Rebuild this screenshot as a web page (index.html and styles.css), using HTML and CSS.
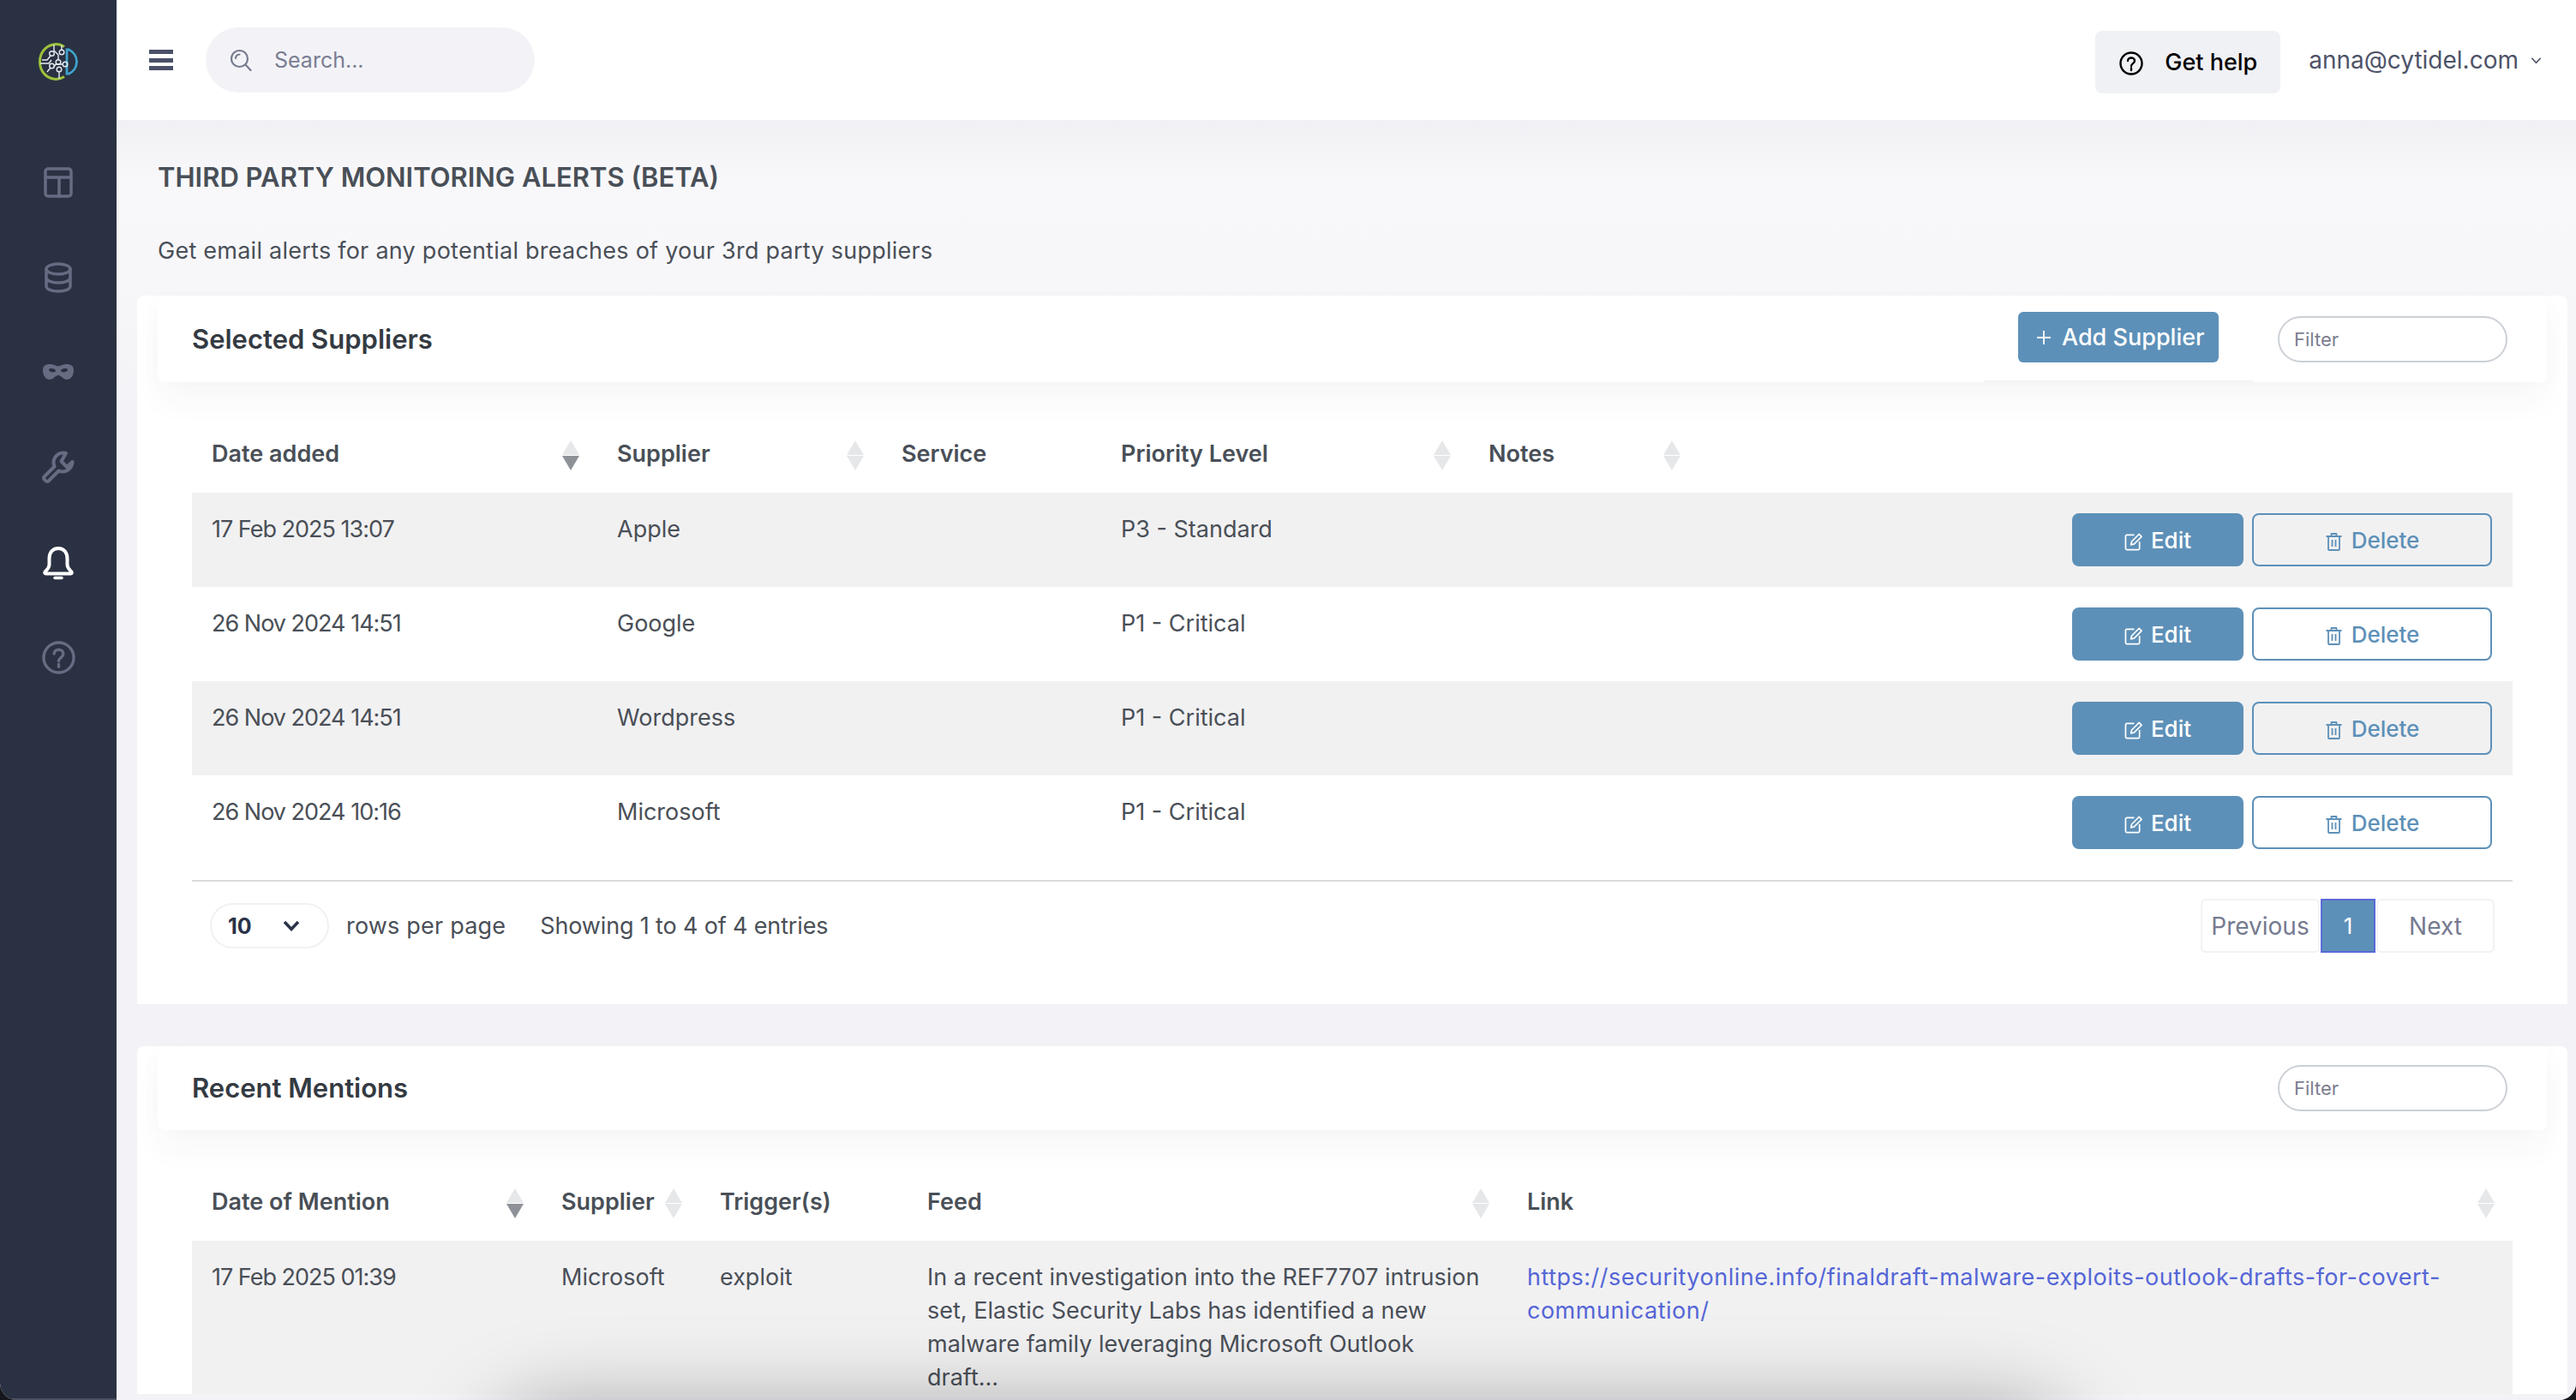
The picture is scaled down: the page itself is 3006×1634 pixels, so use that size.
FILE: index.html
```html
<!DOCTYPE html>
<html lang="en">
<head>
<meta charset="utf-8">
<title>Third Party Monitoring Alerts</title>
<link rel="stylesheet" href="styles.css">
</head>
<body>
<div class="app">
  <aside class="sidebar">
    <svg class="logo" viewBox="0 0 46 44" fill="none">
      <path d="M30 4.500C26 1.800 21 1 17 2 7.500 4 1.500 12 1.500 22c0 10 6 18 15.500 20 4.500 1 9 0 13-2.500" stroke="#9cc23b" stroke-width="3"/>
      <path d="M33 8h2.500C41 10.500 44.500 16 44.500 22S41 33.500 35.500 36H33Z" stroke="#3fa3cc" stroke-width="2.800"/>
      <g stroke="#e8edf2" stroke-width="1.400">
        <path d="M2 24h10l3-4M4 20h6l4-5M18 2v7l5 5v6M27 3v5M14 29l-4 5M24 33v9M18 28l2-3h8"/>
        <circle cx="15.500" cy="12.500" r="2.800"/><circle cx="27" cy="11" r="2.800"/><circle cx="23" cy="22.500" r="2.800"/><circle cx="31" cy="25" r="2.800"/><circle cx="15.500" cy="27" r="2.800"/><circle cx="24" cy="31" r="2.800"/>
      </g>
    </svg>
    <nav class="side-nav">
      <svg class="side-icon" viewBox="0 0 34 36" fill="none"><rect x="2" y="2" width="30" height="32" rx="3"/><path d="M2 12h30M18 12v22"/></svg>
      <svg class="side-icon" viewBox="0 0 34 36" fill="none"><ellipse cx="17" cy="8" rx="14" ry="6"/><path d="M3 8v20c0 3.500 6.300 6 14 6s14-2.500 14-6V8M3 18c0 3.500 6.300 6 14 6s14-2.500 14-6"/></svg>
      <svg class="side-icon side-icon--solid" viewBox="0 0 36 18"><path fill-rule="evenodd" d="M9 0c4 0 6.500 2.500 9 2.500S23 0 27 0c5 0 9 1.500 9 7 0 6-3 11-8 11-4.500 0-6.500-5-10-5s-5.500 5-10 5C3 18 0 13 0 7 0 1.500 4 0 9 0Zm-2 6.500c0 1.800 2.500 3 5 3 1.800 0 3-.8 3-1.700C15 6.300 12.500 5 10 5 8.200 5 7 5.600 7 6.500Zm22 0C29 5.600 27.800 5 26 5c-2.500 0-5 1.300-5 2.800 0 .9 1.200 1.700 3 1.700 2.500 0 5-1.200 5-3Z"/></svg>
      <svg class="side-icon side-icon--wrench" viewBox="0 0 38 38" fill="none"><path d="M25 2.500a11.500 11.500 0 0 0-10.500 16L2.800 30.200a2.500 2.500 0 0 0 0 3.500l1.500 1.500a2.500 2.500 0 0 0 3.500 0L19.500 23.500A11.500 11.500 0 0 0 35.500 13L29 19l-6.500-6.500L28 3a11.500 11.500 0 0 0-3-.5Z"/></svg>
      <svg class="side-icon side-icon--active" viewBox="0 0 36 40" fill="none"><path d="M18 3C11 3 7.500 8.500 7.500 15v7c0 4-3 6-5 8.500-.5 1-.2 2 1 2h29c1.200 0 1.500-1 1-2-2-2.500-5-4.500-5-8.500v-7C28.500 8.500 25 3 18 3Z"/><path d="M14 37.500h8" stroke-width="3.500"/></svg>
      <svg class="side-icon side-icon--help" viewBox="0 0 40 40" fill="none"><circle cx="20" cy="20" r="18"/><path d="M14.500 15.500c0-3 2.500-5 5.500-5s5.500 2 5.500 5c0 4.500-5.500 4.500-5.500 8.500M20 28v3"/></svg>
    </nav>
  </aside>
  <div class="main">
    <header class="topbar">
      <div class="hamburger"><span></span><span></span><span></span></div>
      <div class="search">
        <svg class="search-icon" viewBox="0 0 26 26" fill="none"><circle cx="11.500" cy="11.500" r="9.500"/><path d="M18.500 18.500 24.500 25M7 11a4.500 4.500 0 0 1 4.500-4.500"/></svg>
        <span>Search...</span>
      </div>
      <div class="help-btn">
        <svg class="help-icon" viewBox="0 0 28 28" fill="none"><circle cx="14" cy="14" r="12.500"/><path d="M10 11c0-2 1.800-3.500 4-3.500s4 1.500 4 3.500c0 3-4 3.200-4 6M14 19.500v2.500"/></svg>
        <span>Get help</span>
      </div>
      <div class="user">
        <span>anna@cytidel.com</span>
        <svg class="user-chevron" viewBox="0 0 14 9" fill="none"><path d="m1.500 1.500 5.500 6 5.500-6"/></svg>
      </div>
    </header>
    <main class="content">
      <h1 class="page-title">THIRD PARTY MONITORING ALERTS (BETA)</h1>
      <p class="page-desc">Get email alerts for any potential breaches of your 3rd party suppliers</p>

      <section class="card">
        <div class="card-head card-head--tall">
          <h2 class="card-title">Selected Suppliers</h2>
          <div class="head-actions">
            <div class="add-btn">
              <svg class="plus-icon" viewBox="0 0 16 16" fill="none"><path d="M8 0v16M0 8h16"/></svg>
              <span>Add Supplier</span>
            </div>
          </div>
          <div class="filter">Filter</div>
        </div>
        <table class="table table--suppliers">
          <colgroup><col class="c-date"><col class="c-supplier"><col class="c-service"><col class="c-priority"><col class="c-notes"><col></colgroup>
          <thead>
            <tr>
              <th><div class="th-in">Date added<span class="sort sort--desc"><i></i><i></i></span></div></th>
              <th><div class="th-in">Supplier<span class="sort"><i></i><i></i></span></div></th>
              <th><div class="th-in">Service</div></th>
              <th><div class="th-in">Priority Level<span class="sort"><i></i><i></i></span></div></th>
              <th><div class="th-in">Notes<span class="sort"><i></i><i></i></span></div></th>
              <th></th>
            </tr>
          </thead>
          <tbody>
            <tr>
              <td>17 Feb 2025 13:07</td><td>Apple</td><td></td><td>P3 - Standard</td><td></td>
              <td class="actions"><div class="action-row">
                <div class="btn btn--edit"><svg class="btn-icon" viewBox="0 0 22 22" fill="none"><path d="M12 3H3a1.500 1.500 0 0 0-1.500 1.500v15A1.500 1.500 0 0 0 3 21h14a1.500 1.500 0 0 0 1.500-1.500V11"/><path d="M8 15l1-4 9-9 3 3-9 9Z"/></svg>Edit</div>
                <div class="btn btn--delete"><svg class="btn-icon" viewBox="0 0 20 22" fill="none"><path d="M1 5h18M7 5V2h6v3M3.500 5v15a1 1 0 0 0 1 1h11a1 1 0 0 0 1-1V5M8 9v8M12 9v8"/></svg>Delete</div>
              </div></td>
            </tr>
            <tr>
              <td>26 Nov 2024 14:51</td><td>Google</td><td></td><td>P1 - Critical</td><td></td>
              <td class="actions"><div class="action-row">
                <div class="btn btn--edit"><svg class="btn-icon" viewBox="0 0 22 22" fill="none"><path d="M12 3H3a1.500 1.500 0 0 0-1.500 1.500v15A1.500 1.500 0 0 0 3 21h14a1.500 1.500 0 0 0 1.500-1.500V11"/><path d="M8 15l1-4 9-9 3 3-9 9Z"/></svg>Edit</div>
                <div class="btn btn--delete"><svg class="btn-icon" viewBox="0 0 20 22" fill="none"><path d="M1 5h18M7 5V2h6v3M3.500 5v15a1 1 0 0 0 1 1h11a1 1 0 0 0 1-1V5M8 9v8M12 9v8"/></svg>Delete</div>
              </div></td>
            </tr>
            <tr>
              <td>26 Nov 2024 14:51</td><td>Wordpress</td><td></td><td>P1 - Critical</td><td></td>
              <td class="actions"><div class="action-row">
                <div class="btn btn--edit"><svg class="btn-icon" viewBox="0 0 22 22" fill="none"><path d="M12 3H3a1.500 1.500 0 0 0-1.500 1.500v15A1.500 1.500 0 0 0 3 21h14a1.500 1.500 0 0 0 1.500-1.500V11"/><path d="M8 15l1-4 9-9 3 3-9 9Z"/></svg>Edit</div>
                <div class="btn btn--delete"><svg class="btn-icon" viewBox="0 0 20 22" fill="none"><path d="M1 5h18M7 5V2h6v3M3.500 5v15a1 1 0 0 0 1 1h11a1 1 0 0 0 1-1V5M8 9v8M12 9v8"/></svg>Delete</div>
              </div></td>
            </tr>
            <tr>
              <td>26 Nov 2024 10:16</td><td>Microsoft</td><td></td><td>P1 - Critical</td><td></td>
              <td class="actions"><div class="action-row">
                <div class="btn btn--edit"><svg class="btn-icon" viewBox="0 0 22 22" fill="none"><path d="M12 3H3a1.500 1.500 0 0 0-1.500 1.500v15A1.500 1.500 0 0 0 3 21h14a1.500 1.500 0 0 0 1.500-1.500V11"/><path d="M8 15l1-4 9-9 3 3-9 9Z"/></svg>Edit</div>
                <div class="btn btn--delete"><svg class="btn-icon" viewBox="0 0 20 22" fill="none"><path d="M1 5h18M7 5V2h6v3M3.500 5v15a1 1 0 0 0 1 1h11a1 1 0 0 0 1-1V5M8 9v8M12 9v8"/></svg>Delete</div>
              </div></td>
            </tr>
          </tbody>
        </table>
        <div class="table-foot">
          <div class="rows-select">
            <span>10</span>
            <svg class="rows-chevron" viewBox="0 0 20 13" fill="none"><path d="m2 2 8 8.500L18 2"/></svg>
          </div>
          <span class="rows-label">rows per page</span>
          <span class="entries">Showing 1 to 4 of 4 entries</span>
          <div class="pager">
            <div class="page-btn page-btn--prev">Previous</div>
            <div class="page-btn page-btn--current">1</div>
            <div class="page-btn page-btn--next">Next</div>
          </div>
        </div>
      </section>

      <section class="card card--second">
        <div class="card-head">
          <h2 class="card-title">Recent Mentions</h2>
          <div class="filter">Filter</div>
        </div>
        <table class="table table--mentions">
          <colgroup><col class="m-date"><col class="m-supplier"><col class="m-trigger"><col class="m-feed"><col></colgroup>
          <thead>
            <tr>
              <th><div class="th-in">Date of Mention<span class="sort sort--desc"><i></i><i></i></span></div></th>
              <th><div class="th-in">Supplier<span class="sort"><i></i><i></i></span></div></th>
              <th><div class="th-in">Trigger(s)</div></th>
              <th><div class="th-in">Feed<span class="sort"><i></i><i></i></span></div></th>
              <th><div class="th-in">Link<span class="sort"><i></i><i></i></span></div></th>
            </tr>
          </thead>
          <tbody>
            <tr>
              <td>17 Feb 2025 01:39</td>
              <td>Microsoft</td>
              <td>exploit</td>
              <td>In a recent investigation into the REF7707 intrusion<br>set, Elastic Security Labs has identified a new<br>malware family leveraging Microsoft Outlook<br>draft...</td>
              <td><a class="link" href="#">https://securityonline.info/finaldraft-malware-exploits-outlook-drafts-for-covert-<br>communication/</a></td>
            </tr>
          </tbody>
        </table>
      </section>
    </main>
  </div>
  <div class="edge-shadow"></div>
</div>
</body>
</html>
```
FILE: styles.css
```css
* { box-sizing: border-box; }
html, body { margin: 0; height: 100%; background: #15171d; }
body { font-family: Inter, "Noto Sans", "Liberation Sans", sans-serif; font-size: 27px; color: #4a4f57; overflow: hidden; }

.app { position: relative; display: flex; width: 3006px; height: 1634px; overflow: hidden; border-radius: 0 0 20px 20px; background: #f6f6f9; }

.sidebar { flex: 0 0 136px; background: #2a3142; display: flex; flex-direction: column; align-items: center; padding-top: 50px; border-bottom: 2px solid #4b4f5e; }
.logo { width: 46px; height: 44px; margin-bottom: 101px; }
.side-nav { display: flex; flex-direction: column; align-items: center; }
.side-icon { display: block; stroke: #666c82; stroke-width: 3.500; stroke-linecap: round; stroke-linejoin: round; width: 36px; height: 36px; margin-bottom: 75px; }
.side-icon--solid { fill: #666c82; stroke: none; height: 18px; margin: 8px 0 83px; }
.side-icon--wrench { width: 38px; height: 38px; margin-bottom: 73px; stroke-width: 4; }
.side-icon--active { stroke: #fff; stroke-width: 4; height: 40px; margin-bottom: 71px; }
.side-icon--help { width: 39px; height: 39px; margin-bottom: 0; }

.main { flex: 1; min-width: 0; display: flex; flex-direction: column; }

.topbar { flex: 0 0 140px; background: #fff; display: flex; align-items: center; padding: 0 40px 0 38px; }
.hamburger { width: 28px; display: flex; flex-direction: column; gap: 4.500px; margin-right: 38px; }
.hamburger span { display: block; height: 5px; background: #4a5068; }
.search { width: 384px; height: 76px; border-radius: 38px; background: #f3f3f7; display: flex; align-items: center; padding-left: 28px; color: #7a7d92; font-size: 25px; }
.search-icon { width: 26px; height: 26px; margin-right: 26px; stroke: #777b90; stroke-width: 2.200; stroke-linecap: round; }
.help-btn { margin-left: auto; width: 216px; height: 73px; background: #f0f1f5; border-radius: 8px; display: flex; align-items: center; padding-left: 28px; color: #000; gap: 25px; font-size: 27px; font-weight: 500; margin-top: 5px; margin-right: 1px; }
.help-icon { width: 28px; height: 28px; stroke: #000; stroke-width: 2.400; stroke-linecap: round; margin-top: 3px; }
.user { display: flex; align-items: center; margin-left: 32px; color: #4e5368; gap: 14px; font-size: 28px; }
.user-chevron { width: 13px; height: 9px; stroke: #4e5368; stroke-width: 1.800; }

.content { flex: 1; min-height: 0; padding: 0 10px 0 24px; background: linear-gradient(#f1f1f5, #f8f8fa 70px, #f7f7fa 180px, #f3f3f7 345px); }
.page-title { margin: 0; padding: 44px 0 0 24px; font-size: 31px; line-height: 46px; font-weight: 600; color: #494f57; }
.page-desc { margin: 0; padding: 43px 0 0 24px; line-height: 39px; color: #4a4f57; height: 115px; letter-spacing: .25px; }

.card { background: #fff; border-radius: 8px 8px 0 0; padding: 0 64px; }
.card--second { margin-top: 49px; }
.card-head { height: 98px; margin: 0 -40px; padding: 0 46px 0 40px; background: #fff; border-radius: 8px; display: flex; align-items: center; box-shadow: 0 24px 34px rgba(60, 60, 80, .035), -10px 0 24px rgba(60, 60, 80, .012), 10px 0 24px rgba(60, 60, 80, .012); }
.card-head--tall { height: 101px; }
.card-title { margin: 0; font-size: 31px; font-weight: 600; color: #343a42; line-height: 40px; }
.head-actions { margin-left: auto; align-self: stretch; padding: 0 40px; display: flex; align-items: center; border-bottom: 2px solid #f3f3f7; }
.add-btn { width: 234px; height: 59px; background: #5d90b8; border-radius: 6px; color: #fff; display: flex; align-items: center; padding-left: 22px; gap: 13px; font-size: 27px; font-weight: 500; margin-bottom: 2px; }
.plus-icon { width: 16px; height: 16px; stroke: #fff; stroke-width: 1.800; }
.filter { width: 268px; height: 54px; border: 2px solid #ccd0d6; border-radius: 27px; margin-left: 29px; padding-left: 17px; display: flex; align-items: center; font-size: 22px; color: #7c7e90; background: #fff; }
.card-head:not(.card-head--tall) .filter { margin-left: auto; }

.table { width: 100%; border-collapse: collapse; table-layout: fixed; margin-top: 39px; }
.c-date { width: 473px; } .c-supplier { width: 332px; } .c-service { width: 256px; } .c-priority { width: 429px; } .c-notes { width: 268px; }
.m-date { width: 408px; } .m-supplier { width: 185px; } .m-trigger { width: 242px; } .m-feed { width: 700px; }
th { height: 90px; padding: 0 21px 0 23px; text-align: left; font-weight: 600; font-size: 27px; color: #494f57; }
.th-in { display: flex; align-items: center; justify-content: space-between; line-height: 36px; white-space: nowrap; }
.sort { display: inline-flex; flex-direction: column; gap: 1px; margin-top: 2px; }
.sort i { display: block; width: 0; height: 0; border-left: 10px solid transparent; border-right: 10px solid transparent; }
.sort i:first-child { border-bottom: 17px solid #e6e7e9; }
.sort i:last-child { border-top: 17px solid #e6e7e9; }
.sort--desc i:last-child { border-top-color: #8e9298; }

td { height: 110px; padding: 23px 23px 0; vertical-align: top; line-height: 39px; white-space: nowrap; color: #4a4f57; }
td:first-child { letter-spacing: -1px; }
tbody tr:nth-child(odd) td { background: #f1f1f2; }
.link { color: #5566d6; text-decoration: none; letter-spacing: .5px; }

td.actions { padding: 24px 24px 0 0; }
.action-row { display: flex; justify-content: flex-end; gap: 10px; }
.btn { height: 62px; border-radius: 8px; display: flex; align-items: center; justify-content: center; gap: 10px; font-size: 26px; font-weight: 500; }
.btn--edit { width: 200px; background: #5d90b8; color: #fff; stroke: #fff; }
.btn--delete { width: 280px; border: 2px solid #5d90b8; color: #5d90b8; stroke: #5d90b8; }
.btn-icon { width: 21px; height: 22px; stroke-width: 1.800; stroke-linejoin: round; margin-top: 3px; }

.table-foot { margin-top: 12px; border-top: 2px solid #dcdcde; padding: 20px 0 60px; display: flex; align-items: center; height: 145px; }
.rows-select { margin-left: 21px; width: 139px; height: 53px; border: 2px solid #f1f1f5; border-radius: 27px; display: flex; align-items: center; padding-left: 19px; font-size: 25px; font-weight: 700; color: #2b3348; }
.rows-chevron { width: 20px; height: 13px; stroke: #2b3348; stroke-width: 3.500; margin-left: 36px; }
.rows-label { margin-left: 20px; letter-spacing: .2px; }
.entries { margin-left: 40px; letter-spacing: -.15px; }
.pager { margin-left: auto; margin-right: 21px; display: flex; gap: 1px; color: #767a90; font-size: 28px; }
.page-btn { height: 63px; display: flex; align-items: center; justify-content: center; border: 2px solid #f2f2f6; border-radius: 6px; background: #fff; }
.page-btn--prev { width: 139px; }
.page-btn--next { width: 138px; }
.page-btn--current { width: 64px; background: #5d90b8; border-color: #5a6ad8; border-radius: 0; color: #fff; font-size: 26px; }

.edge-shadow { position: absolute; left: 610px; width: 1770px; top: 1676px; height: 60px; border-radius: 100px; box-shadow: 0 0 100px 30px rgba(0, 0, 0, .36); pointer-events: none; }
```
